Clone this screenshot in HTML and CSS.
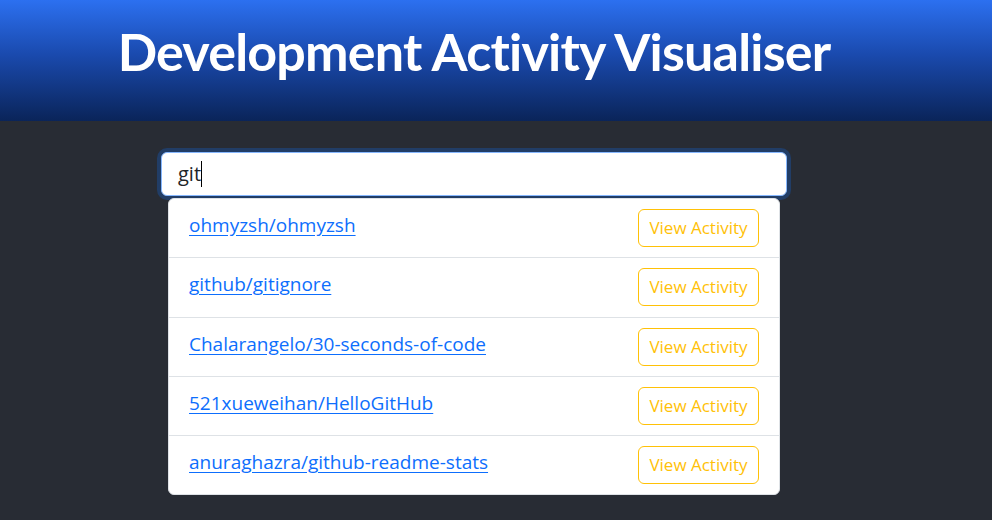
FILE: index.html
```html
<!DOCTYPE html>
<html lang="en">
<head>
<meta charset="utf-8">
<title>Development Activity Visualiser</title>
<link rel="stylesheet" href="styles.css">
</head>
<body>
<header class="app-header">
  <h1 class="title">Development Activity Visualiser</h1>
</header>
<main class="content">
  <div class="search">
    <div class="search-input" role="textbox" aria-label="Search repositories"><span class="search-text">git</span><span class="caret"></span></div>
    <ul class="results">
      <li class="result"><a href="#" class="repo-link">ohmyzsh/ohmyzsh</a><button class="view-btn" type="button">View Activity</button></li>
      <li class="result"><a href="#" class="repo-link">github/gitignore</a><button class="view-btn" type="button">View Activity</button></li>
      <li class="result"><a href="#" class="repo-link">Chalarangelo/30-seconds-of-code</a><button class="view-btn" type="button">View Activity</button></li>
      <li class="result"><a href="#" class="repo-link">521xueweihan/HelloGitHub</a><button class="view-btn" type="button">View Activity</button></li>
      <li class="result"><a href="#" class="repo-link">anuraghazra/github-readme-stats</a><button class="view-btn" type="button">View Activity</button></li>
    </ul>
  </div>
</main>
</body>
</html>
```
FILE: styles.css
```css
* { box-sizing: border-box; }

body {
  margin: 0;
  background: #282c34;
  font-family: "Open Sans", "Noto Sans", sans-serif;
  color: #212529;
}

.app-header {
  height: 121px;
  background: linear-gradient(180deg, #2c70f0 0%, #1a4aae 45%, #0a2459 100%);
  display: flex;
  justify-content: center;
  padding-right: 44px;
}

.title {
  margin: 0;
  padding-top: 19px;
  font-family: "Lato", "Open Sans", sans-serif;
  font-size: 52px;
  line-height: 64px;
  font-weight: 700;
  letter-spacing: -0.8px;
  color: #fff;
  white-space: nowrap;
}

.content {
  display: flex;
  justify-content: center;
  padding-right: 44px;
  padding-top: 31px;
}

.search {
  width: 626px;
  display: flex;
  flex-direction: column;
  align-items: center;
}

.search-input {
  width: 100%;
  height: 44px;
  border: 1px solid #86b7fe;
  border-radius: 6px;
  background: #fff;
  box-shadow: 0 0 0 4px rgba(13, 110, 253, 0.25);
  padding: 0 16px;
  display: flex;
  align-items: center;
  font-size: 20px;
  line-height: 26px;
  color: #212529;
}

.caret {
  display: inline-block;
  width: 1px;
  height: 26px;
  background: #000;
}

.results {
  position: relative;
  z-index: 1;
  width: 612px;
  margin: 2px 0 0;
  padding: 0;
  list-style: none;
  background: #fff;
  border: 1px solid #dee2e6;
  border-radius: 6px;
}

.result {
  display: flex;
  align-items: center;
  justify-content: space-between;
  padding: 10px 20px 10.25px;
  border-bottom: 1px solid #dee2e6;
}

.result:last-child { border-bottom: 0; }

.repo-link {
  color: #0d6efd;
  font-size: 19px;
  line-height: 26px;
  margin-bottom: 6px;
  text-decoration: underline;
  text-underline-offset: 3px;
}

.view-btn {
  width: 121px;
  height: 38px;
  padding: 0;
  border: 1px solid #ffc107;
  border-radius: 6px;
  background: transparent;
  color: #ffc107;
  font-family: "Open Sans", "Noto Sans", sans-serif;
  font-size: 17px;
  line-height: 24px;
  cursor: pointer;
}
```
